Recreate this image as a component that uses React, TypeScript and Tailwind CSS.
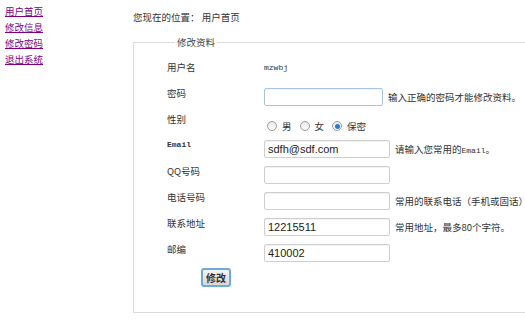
import React from "react";

const cjk = { fontFamily: '"Noto Sans CJK SC", "Liberation Sans", sans-serif' };

function Radio({ checked }: { checked?: boolean }) {
  return (
    <span className="inline-flex items-center justify-center w-[10px] h-[10px] rounded-full border border-[#9a9a9a] bg-gradient-to-b from-[#e8e8e8] to-[#ffffff]">
      {checked && <span className="w-[5px] h-[5px] rounded-full bg-[#2a78c8]" />}
    </span>
  );
}

function Field({
  label,
  mono,
  children,
}: {
  label: string;
  mono?: boolean;
  children?: React.ReactNode;
}) {
  return (
    <div className="flex h-[26px] items-start">
      <div
        className={
          mono
            ? "w-[97px] text-[8px] leading-[12px] font-bold text-[#333]"
            : "w-[97px] text-[9.5px] leading-[12px] text-[#333]"
        }
        style={mono ? { fontFamily: '"Liberation Mono", monospace' } : undefined}
      >
        {label}
      </div>
      <div className="flex items-center h-[18px] mt-[1px]">{children}</div>
    </div>
  );
}

function Input({ value, w = "w-[126px]", focus }: { value?: string; w?: string; focus?: boolean }) {
  return (
    <div
      className={
        (focus ? "border-[#a9c6e0] " : "border-[#cfcfcf] ") +
        w +
        " h-[18px] border rounded-[2px] bg-white shadow-[inset_0_1px_1px_rgba(0,0,0,0.06)] px-[3px] flex items-center text-[11px] text-[#222] shrink-0"
      }
      style={{ fontFamily: '"Liberation Sans", Arial, sans-serif' }}
    >
      {value}
    </div>
  );
}

function Hint({ children }: { children: React.ReactNode }) {
  return <span className="ml-[5px] text-[9.5px] text-[#333] whitespace-nowrap">{children}</span>;
}

export default function App() {
  return (
    <div className="flex w-[525px] h-[325px] bg-white overflow-hidden" style={cjk}>
      <div className="w-[133px] shrink-0 pl-[5px] pt-[3px] flex flex-col">
        {["用户首页", "修改信息", "修改密码", "退出系统"].map((t) => (
          <a key={t} href="#" className="text-[9.5px] leading-[16px] text-[#800080] underline">
            {t}
          </a>
        ))}
      </div>
      <div className="flex-1 flex flex-col">
        <div className="pt-[11px] h-[36px] text-[9.5px] leading-[12px] text-[#333]">
          您现在的位置：&nbsp;用户首页
        </div>
        <fieldset className="border border-[#dcdcdc] mr-[1px] h-[277px] pl-[33px]">
          <legend className="ml-[8px] px-[2px] text-[9.5px] leading-[13px] text-[#444]">修改资料</legend>
          <div className="mt-[12px] flex flex-col">
            <Field label="用户名">
              <span
                className="text-[8px] text-[#333] -mt-[6px]"
                style={{ fontFamily: '"Liberation Mono", monospace' }}
              >
                mzwbj
              </span>
            </Field>
            <Field label="密码">
              <Input w="w-[119px]" focus />
              <Hint>输入正确的密码才能修改资料。</Hint>
            </Field>
            <Field label="性别">
              <div className="flex items-center gap-[5px] text-[9.5px] text-[#333] ml-[3px] mt-[6px]">
                <Radio />
                <span className="mr-[3px]">男</span>
                <Radio />
                <span className="mr-[3px]">女</span>
                <Radio checked />
                <span>保密</span>
              </div>
            </Field>
            <Field label="Email" mono>
              <Input value="sdfh@sdf.com" />
              <Hint>
                请输入您常用的
                <span className="text-[8px]" style={{ fontFamily: '"Liberation Mono", monospace' }}>
                  Email
                </span>
                。
              </Hint>
            </Field>
            <Field label="QQ号码">
              <Input />
            </Field>
            <Field label="电话号码">
              <Input />
              <Hint>常用的联系电话（手机或固话）</Hint>
            </Field>
            <Field label="联系地址">
              <Input value="12215511" />
              <Hint>常用地址，最多80个字符。</Hint>
            </Field>
            <Field label="邮编">
              <Input value="410002" />
            </Field>
            <div className="flex pl-[34px] -mt-[1px]">
              <button className="w-[30px] h-[19px] rounded-[3px] border-2 border-[#6aaed6] bg-gradient-to-b from-[#f4f4f4] to-[#d8d8d8] text-[10px] leading-[14px] font-bold text-[#333]">
                修改
              </button>
            </div>
          </div>
        </fieldset>
      </div>
    </div>
  );
}
